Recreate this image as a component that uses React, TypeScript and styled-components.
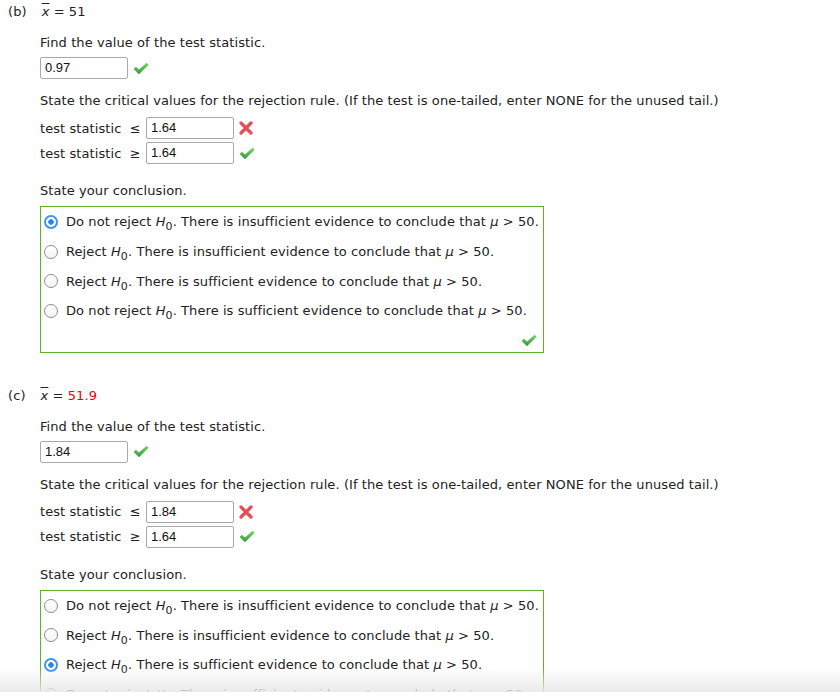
import React from 'react';
import styled, { createGlobalStyle } from 'styled-components';

const Global = createGlobalStyle`
	body {
		margin: 0;
		background: #fff;
		font-family: "DejaVu Sans", Verdana, sans-serif;
		font-size: 13px;
		letter-spacing: 0.08px;
		color: #222;
	}
`

const Page = styled.div`
	padding: 4px 8px 0 8px;
`
const Part = styled.section`
	margin-bottom: 35px;
`
const PartHead = styled.div`
	display: flex;
	line-height: 16px;
	gap: 15px;
`
const XBar = styled.span`
	font-style: italic;
	text-decoration: overline;
`
const Value = styled.span<{ $wrong?: boolean }>`
	color: ${p => (p.$wrong ? '#e8000b' : 'inherit')};
`
const Body = styled.div`
	padding-left: 32px;
`
const Prompt = styled.p<{ $top: number }>`
	margin: ${p => p.$top}px 0 0 0;
	line-height: 16px;
`
const FieldRow = styled.div<{ $top: number }>`
	display: flex;
	align-items: center;
	margin-top: ${p => p.$top}px;
	height: 22px;
`
const Label = styled.span`
	width: 106px;
	white-space: pre;
`
const Input = styled.div`
	box-sizing: border-box;
	width: 88px;
	height: 22px;
	border: 1px solid #a9a9a9;
	border-radius: 2px;
	font-family: "Liberation Sans", Arial, sans-serif;
	font-size: 13px;
	letter-spacing: 0;
	line-height: 20px;
	padding-left: 4px;
	color: #111;
`
const Mark = styled.span`
	display: inline-flex;
	margin-left: 5px;
`
const Choices = styled.div`
	box-sizing: border-box;
	width: 504px;
	margin-top: 7px;
	border: 1px solid #5cb32a;
	padding: 0 4px 0 3px;
`
const Choice = styled.div`
	display: flex;
	align-items: center;
	height: 29.7px;
	white-space: nowrap;
`
const Radio = styled.span<{ $on?: boolean }>`
	box-sizing: border-box;
	width: 14px;
	height: 14px;
	border-radius: 50%;
	margin-right: 8px;
	flex: none;
	border: ${p => (p.$on ? '2px solid #3d94f6' : '1px solid #8e8e8e')};
	background: ${p =>
		p.$on
			? 'radial-gradient(circle, #2f86f0 0 2.5px, #fff 3px)'
			: 'linear-gradient(#fff, #f3f3f3)'};
`
const H = styled.i``
const Sub = styled.sub`
	font-style: normal;
	font-size: 11px;
	vertical-align: -4px;
	line-height: 0;
`
const Mu = styled.i``
const BoxFoot = styled.div`
	display: flex;
	justify-content: flex-end;
	align-items: flex-end;
	height: 26px;
	padding: 0 2px 5px 0;
	box-sizing: border-box;
`
const Fade = styled.div`
	position: fixed;
	left: 0;
	right: 0;
	bottom: 0;
	height: 24px;
	background: linear-gradient(rgba(255, 255, 255, 0), rgba(232, 232, 232, 0.9));
	pointer-events: none;
`

const Check = () => (
	<svg width="16" height="13" viewBox="0 0 16 13">
		<defs>
			<linearGradient id="cg" x1="0" y1="0" x2="0" y2="1">
				<stop offset="0" stopColor="#7ed36a" />
				<stop offset="1" stopColor="#2f9a3a" />
			</linearGradient>
		</defs>
		<path d="M0.5 7 L3 4.8 L6 7.6 L13.6 0.8 L15.6 2.8 L6 12.3 Z" fill="url(#cg)" />
	</svg>
)

const Cross = () => (
	<svg width="14" height="14" viewBox="0 0 14 14">
		<path d="M2 2 L12 12 M12 2 L2 12" stroke="#ec4a55" strokeWidth="3.2" strokeLinecap="round" />
	</svg>
)

const Ho = () => (
	<>
		<H>H</H>
		<Sub>0</Sub>
	</>
)

const options = [
	{ head: 'Do not reject', rest: 'insufficient' },
	{ head: 'Reject', rest: 'insufficient' },
	{ head: 'Reject', rest: 'sufficient' },
	{ head: 'Do not reject', rest: 'sufficient' },
]

type PartProps = {
	tag: string
	xbar: string
	wrongX?: boolean
	stat: string
	lower: string
	upper: string
	picked: number
}

const Section = ({ tag, xbar, wrongX, stat, lower, upper, picked }: PartProps) => (
	<Part>
		<PartHead>
			<span>({tag})</span>
			<span>
				<XBar>x</XBar> = <Value $wrong={wrongX}>{xbar}</Value>
			</span>
		</PartHead>
		<Body>
			<Prompt $top={15}>Find the value of the test statistic.</Prompt>
			<FieldRow $top={6}>
				<Input>{stat}</Input>
				<Mark><Check /></Mark>
			</FieldRow>
			<Prompt $top={14}>
				State the critical values for the rejection rule. (If the test is one-tailed, enter NONE for the unused tail.)
			</Prompt>
			<FieldRow $top={8}>
				<Label>test statistic  ≤</Label>
				<Input>{lower}</Input>
				<Mark><Cross /></Mark>
			</FieldRow>
			<FieldRow $top={3}>
				<Label>test statistic  ≥</Label>
				<Input>{upper}</Input>
				<Mark><Check /></Mark>
			</FieldRow>
			<Prompt $top={19}>State your conclusion.</Prompt>
			<Choices>
				{options.map((o, i) => (
					<Choice key={i}>
						<Radio $on={i === picked} />
						<span>
							{o.head} <Ho />. There is {o.rest} evidence to conclude that <Mu>μ</Mu> &gt; 50.
						</span>
					</Choice>
				))}
				<BoxFoot>
					<Check />
				</BoxFoot>
			</Choices>
		</Body>
	</Part>
)

const App = () => (
	<React.Fragment>
		<Global />
		<Page>
			<Section tag="b" xbar="51" stat="0.97" lower="1.64" upper="1.64" picked={0} />
			<Section tag="c" xbar="51.9" wrongX stat="1.84" lower="1.84" upper="1.64" picked={2} />
		</Page>
		<Fade />
	</React.Fragment>
)

export default App;
